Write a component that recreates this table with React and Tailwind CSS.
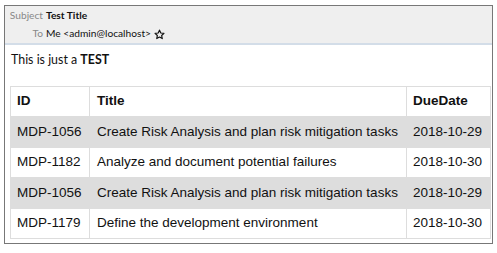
import React from 'react';

const rows = [
  { id: 'MDP-1056', title: 'Create Risk Analysis and plan risk mitigation tasks', due: '2018-10-29' },
  { id: 'MDP-1182', title: 'Analyze and document potential failures', due: '2018-10-30' },
  { id: 'MDP-1056', title: 'Create Risk Analysis and plan risk mitigation tasks', due: '2018-10-29' },
  { id: 'MDP-1179', title: 'Define the development environment', due: '2018-10-30' },
];

function StarOutline() {
  return (
    <svg width="11" height="11" viewBox="0 0 24 24" className="ml-[3px]">
      <path
        d="M12 2.5l2.9 6.2 6.8.8-5 4.7 1.3 6.7L12 17.6l-6 3.3 1.3-6.7-5-4.7 6.8-.8z"
        fill="none"
        stroke="#111"
        strokeWidth="2.6"
        strokeLinejoin="round"
      />
    </svg>
  );
}

export default function App() {
  return (
    <div className="pl-[4px] pt-[5px] bg-white w-[497px] h-[253px]">
      <div className="w-[489px] h-[239px] border border-[#777777] bg-white flex flex-col">
        {/* message header */}
        <div className="h-[39px] bg-[#efefef] border-b-2 border-[#d3dde8] pt-[1px] font-['Lato',sans-serif] text-[10.2px] text-[#111]">
          <div className="flex items-center h-[18px]">
            <span className="w-[38px] text-right text-[#888888]">Subject</span>
            <span className="ml-[3px] font-bold">Test Title</span>
          </div>
          <div className="flex items-center h-[18px]">
            <span className="w-[38px] text-right text-[#888888]">To</span>
            <span className="ml-[3px]">Me &lt;admin@localhost&gt;</span>
            <StarOutline />
          </div>
        </div>

        {/* message body */}
        <div className="pl-[5px] pt-[6px]">
          <p className="font-['Lato',sans-serif] text-[12.4px] leading-[18px] text-[#111] pl-[1px]">
            This is just a <b>TEST</b>
          </p>
          <table className="mt-[17px] w-[480px] table-fixed border-collapse font-['Liberation_Sans',Arial,sans-serif] text-[13.5px] text-[#111]">
            <colgroup>
              <col className="w-[79px]" />
              <col className="w-[317px]" />
              <col className="w-[84px]" />
            </colgroup>
            <thead>
              <tr>
                <th className="border border-[#dddddd] h-[30px] px-[6px] text-left font-bold">ID</th>
                <th className="border border-[#dddddd] h-[30px] px-[7px] text-left font-bold">Title</th>
                <th className="border border-[#dddddd] h-[30px] px-[6px] text-left font-bold">DueDate</th>
              </tr>
            </thead>
            <tbody>
              {rows.map((r, i) => {
                const gray = i % 2 === 0;
                const cell = gray
                  ? 'border border-[#dddddd] h-[31px] whitespace-nowrap'
                  : 'border border-[#dddddd] h-[30px] whitespace-nowrap';
                return (
                  <tr key={i} className={gray ? 'bg-[#dddddd]' : 'bg-white'}>
                    <td className={cell + ' px-[6px]'}>{r.id}</td>
                    <td className={cell + ' px-[7px]'}>{r.title}</td>
                    <td className={cell + ' px-[6px]'}>{r.due}</td>
                  </tr>
                );
              })}
            </tbody>
          </table>
        </div>
      </div>
    </div>
  );
}
